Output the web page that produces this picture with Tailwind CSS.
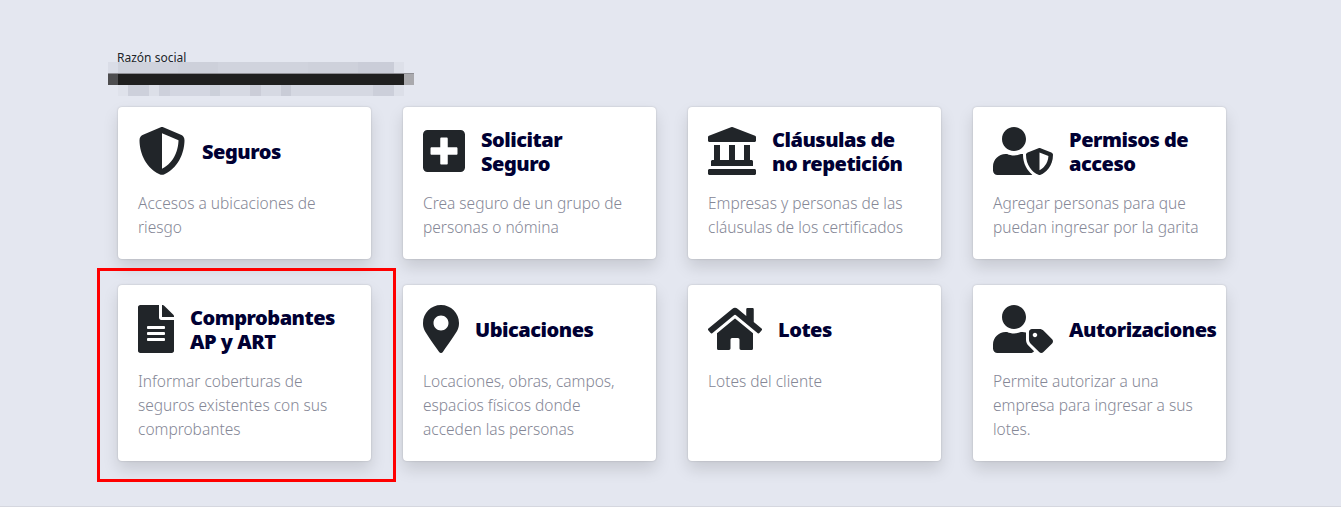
<!DOCTYPE html>
<html lang="es">
  <head>
    <meta charset="UTF-8" />
    <title>Inicio</title>
    <script src="https://cdn.jsdelivr.net/npm/@tailwindcss/browser@4"></script>
  </head>
  <body class="bg-[#e4e7f0] font-['Noto_Sans',sans-serif] overflow-hidden">
    <main class="relative h-[507px] border-b border-[#d5d7df] pl-[118px] pr-[115px]">
      <div class="h-[107px] pt-[50px]">
        <p class="h-[12px] -ml-px text-[12px] leading-[16px] text-[#212529]">Razón social</p>
        <!-- razon social pixelada -->
        <div class="relative -ml-[10px] w-[306px] h-[34px] flex flex-col">
          <div class="flex h-[11px]">
            <div class="w-[10px] bg-[#dadde7]"></div>
            <div class="w-[60px] bg-[#cfd2dc]"></div>
            <div class="w-[40px] bg-[#cdd0da]"></div>
            <div class="w-[90px] bg-[#d0d3dd]"></div>
            <div class="w-[50px] bg-[#ced1db]"></div>
            <div class="w-[36px] bg-[#cacdd8]"></div>
            <div class="w-[10px] bg-[#dde0e9]"></div>
          </div>
          <div class="flex h-[12px] border-t border-[#8f8f95]">
            <div class="w-[10px] bg-[#4d4d4f]"></div>
            <div class="w-[286px] bg-[#1f1f1f]"></div>
            <div class="w-[10px] bg-[#a9a9ad]"></div>
          </div>
          <div class="flex h-[11px] pl-[10px]">
            <div class="w-[10px] bg-[#dfe2eb]"></div>
            <div class="w-[21px] bg-[#cdd0db]"></div>
            <div class="w-[10px] bg-[#dcdfe8]"></div>
            <div class="w-[11px] bg-[#cdd0db]"></div>
            <div class="w-[40px] bg-[#d3d6e1]"></div>
            <div class="w-[10px] bg-[#ccd0da]"></div>
            <div class="w-[30px] bg-[#d6d9e3]"></div>
            <div class="w-[11px] bg-[#cbcdd8]"></div>
            <div class="w-[20px] bg-[#d6d9e3]"></div>
            <div class="w-[10px] bg-[#c9ccd7]"></div>
            <div class="w-[82px] bg-[#d5d8e2]"></div>
            <div class="w-[21px] bg-[#cccfda]"></div>
            <div class="w-[10px] bg-[#dcdfe8]"></div>
          </div>
        </div>
      </div>

      <div class="grid grid-cols-4 gap-x-[32px] gap-y-[26px] grid-rows-[152px_176px]">
        <a class="bg-white rounded-[4px] shadow-[0_8px_16px_rgba(0,0,0,0.13),0_0_2px_rgba(0,0,0,0.2)] p-5 block">
          <div class="flex items-center gap-4 h-[48px] mb-4">
            <svg class="w-[48px] h-[48px] fill-[#212529] shrink-0" viewBox="0 0 512 512"><path d="M256 0c4.6 0 9.2 1 13.4 2.9L457.7 82.8c22 9.3 38.4 31 38.3 57.2c-.5 99.2-41.3 280.7-213.6 363.2c-16.7 8-36.1 8-52.8 0C57.3 420.7 16.5 239.2 16 140c-.1-26.2 16.3-47.9 38.3-57.2L242.7 2.9C246.8 1 251.4 0 256 0zm0 66.8V444.8C394 378 431.1 230.1 432 141.4L256 66.8l0 0z"/></svg>
            <h2 class="pt-[2px] text-[20px] leading-[24px] font-black tracking-[-0.5px] text-[#000033]">Seguros</h2>
          </div>
          <p class="text-[15.5px] leading-[24px] font-light text-[#858796]">Accesos a ubicaciones de riesgo</p>
        </a>

        <a class="bg-white rounded-[4px] shadow-[0_8px_16px_rgba(0,0,0,0.13),0_0_2px_rgba(0,0,0,0.2)] p-5 block">
          <div class="flex items-center gap-4 h-[48px] mb-4">
            <svg class="w-[42px] h-[48px] fill-[#212529] shrink-0" viewBox="0 0 448 512"><path d="M400 32H48C21.5 32 0 53.5 0 80v352c0 26.5 21.5 48 48 48h352c26.5 0 48-21.5 48-48V80c0-26.5-21.5-48-48-48zm-32 252c0 6.6-5.4 12-12 12h-92v92c0 6.6-5.4 12-12 12h-56c-6.6 0-12-5.4-12-12v-92H92c-6.6 0-12-5.4-12-12v-56c0-6.6 5.4-12 12-12h92v-92c0-6.6 5.4-12 12-12h56c6.6 0 12 5.4 12 12v92h92c6.6 0 12 5.4 12 12v56z"/></svg>
            <h2 class="pt-[2px] text-[20px] leading-[24px] font-black tracking-[-0.5px] text-[#000033]">Solicitar<br />Seguro</h2>
          </div>
          <p class="text-[15.5px] leading-[24px] font-light text-[#858796]">Crea seguro de un grupo de personas o nómina</p>
        </a>

        <a class="bg-white rounded-[4px] shadow-[0_8px_16px_rgba(0,0,0,0.13),0_0_2px_rgba(0,0,0,0.2)] p-5 block">
          <div class="flex items-center gap-4 h-[48px] mb-4">
            <svg class="w-[48px] h-[48px] fill-[#212529] shrink-0" viewBox="0 0 512 512"><path d="M501.62 92.11L267.24 2.04a31.958 31.958 0 0 0-22.47 0L10.38 92.11A16.001 16.001 0 0 0 0 107.09V144c0 8.84 7.16 16 16 16h480c8.84 0 16-7.16 16-16v-36.91c0-6.67-4.14-12.64-10.38-14.98zM64 192v160H48c-8.84 0-16 7.16-16 16v48h448v-48c0-8.84-7.16-16-16-16h-16V192h-64v160h-96V192h-64v160h-96V192H64zm432 256H16c-8.84 0-16 7.16-16 16v32c0 8.84 7.16 16 16 16h480c8.84 0 16-7.16 16-16v-32c0-8.84-7.16-16-16-16z"/></svg>
            <h2 class="pt-[2px] text-[20px] leading-[24px] font-black tracking-[-0.5px] text-[#000033]">Cláusulas de<br />no repetición</h2>
          </div>
          <p class="text-[15.5px] leading-[24px] font-light text-[#858796]">Empresas y personas de las cláusulas de los certificados</p>
        </a>

        <a class="bg-white rounded-[4px] shadow-[0_8px_16px_rgba(0,0,0,0.13),0_0_2px_rgba(0,0,0,0.2)] p-5 block">
          <div class="flex items-center gap-4 h-[48px] mb-4">
            <svg class="w-[60px] h-[48px] fill-[#212529] shrink-0" viewBox="0 0 640 512"><path d="M622.3 271.1l-115.2-45c-4.1-1.6-12.6-3.7-22.2 0l-115.2 45c-10.7 4.2-17.7 14-17.7 24.9 0 111.6 68.7 188.8 132.9 213.9 9.6 3.7 18 1.6 22.2 0C558.4 489.9 640 420.5 640 296c0-10.9-7-20.7-17.7-24.9zM496 462.4V273.3l95.5 37.3c-5.6 87.1-60.9 135.4-95.5 151.8zM224 256c70.7 0 128-57.3 128-128S294.7 0 224 0 96 57.3 96 128s57.3 128 128 128zm96 40c0-2.5.8-4.8 1.1-7.2-2.5-.1-4.9-.8-7.5-.8h-16.7c-22.2 10.2-46.9 16-72.9 16s-50.6-5.8-72.9-16h-16.7C60.2 288 0 348.2 0 422.4V464c0 26.5 21.5 48 48 48h352c6.8 0 13.3-1.5 19.2-4-54-42.9-99.2-116.7-99.2-212z"/></svg>
            <h2 class="pt-[2px] text-[20px] leading-[24px] font-black tracking-[-0.5px] text-[#000033]">Permisos de<br />acceso</h2>
          </div>
          <p class="text-[15.5px] leading-[24px] font-light text-[#858796]">Agregar personas para que puedan ingresar por la garita</p>
        </a>

        <a class="bg-white rounded-[4px] shadow-[0_8px_16px_rgba(0,0,0,0.13),0_0_2px_rgba(0,0,0,0.2)] p-5 block">
          <div class="flex items-center gap-4 h-[48px] mb-4">
            <svg class="w-[36px] h-[48px] fill-[#212529] shrink-0" viewBox="0 0 384 512"><path d="M224 136V0H24C10.7 0 0 10.7 0 24v464c0 13.3 10.7 24 24 24h336c13.3 0 24-10.7 24-24V160H248c-13.2 0-24-10.8-24-24zm64 236c0 6.6-5.4 12-12 12H108c-6.6 0-12-5.4-12-12v-8c0-6.6 5.4-12 12-12h168c6.6 0 12 5.4 12 12v8zm0-64c0 6.6-5.4 12-12 12H108c-6.6 0-12-5.4-12-12v-8c0-6.6 5.4-12 12-12h168c6.6 0 12 5.4 12 12v8zm0-72v8c0 6.6-5.4 12-12 12H108c-6.6 0-12-5.4-12-12v-8c0-6.6 5.4-12 12-12h168c6.6 0 12 5.4 12 12zm96-114.1v6.1H256V0h6.1c6.4 0 12.5 2.5 17 7l97.9 98c4.5 4.5 7 10.6 7 16.9z"/></svg>
            <h2 class="pt-[2px] text-[20px] leading-[24px] font-black tracking-[-0.5px] text-[#000033]">Comprobantes<br />AP y ART</h2>
          </div>
          <p class="text-[15.5px] leading-[24px] font-light text-[#858796]">Informar coberturas de seguros existentes con sus comprobantes</p>
        </a>

        <a class="bg-white rounded-[4px] shadow-[0_8px_16px_rgba(0,0,0,0.13),0_0_2px_rgba(0,0,0,0.2)] p-5 block">
          <div class="flex items-center gap-4 h-[48px] mb-4">
            <svg class="w-[36px] h-[48px] fill-[#212529] shrink-0" viewBox="0 0 384 512"><path d="M172.268 501.67C26.97 291.031 0 269.413 0 192 0 85.961 85.961 0 192 0s192 85.961 192 192c0 77.413-26.97 99.031-172.268 309.67-9.535 13.774-29.93 13.773-39.464 0zM192 272c44.183 0 80-35.817 80-80s-35.817-80-80-80-80 35.817-80 80 35.817 80 80 80z"/></svg>
            <h2 class="pt-[2px] text-[20px] leading-[24px] font-black tracking-[-0.5px] text-[#000033]">Ubicaciones</h2>
          </div>
          <p class="text-[15.5px] leading-[24px] font-light text-[#858796]">Locaciones, obras, campos, espacios físicos donde acceden las personas</p>
        </a>

        <a class="bg-white rounded-[4px] shadow-[0_8px_16px_rgba(0,0,0,0.13),0_0_2px_rgba(0,0,0,0.2)] p-5 block">
          <div class="flex items-center gap-4 h-[48px] mb-4">
            <svg class="w-[54px] h-[48px] fill-[#212529] shrink-0" viewBox="0 0 576 512"><path d="M280.37 148.26L96 300.11V464a16 16 0 0 0 16 16l112.06-.29a16 16 0 0 0 15.92-16V368a16 16 0 0 1 16-16h64a16 16 0 0 1 16 16v95.64a16 16 0 0 0 16 16.05L464 480a16 16 0 0 0 16-16V300L295.67 148.26a12.19 12.19 0 0 0-15.3 0zM571.6 251.47L488 182.56V44.05a12 12 0 0 0-12-12h-56a12 12 0 0 0-12 12v72.61L318.47 43a48 48 0 0 0-61 0L4.34 251.47a12 12 0 0 0-1.6 16.9l25.5 31A12 12 0 0 0 45.15 301l235.22-193.74a12.19 12.19 0 0 1 15.3 0L530.9 301a12 12 0 0 0 16.9-1.6l25.5-31a12 12 0 0 0-1.7-16.93z"/></svg>
            <h2 class="pt-[2px] text-[20px] leading-[24px] font-black tracking-[-0.5px] text-[#000033]">Lotes</h2>
          </div>
          <p class="text-[15.5px] leading-[24px] font-light text-[#858796]">Lotes del cliente</p>
        </a>

        <a class="bg-white rounded-[4px] shadow-[0_8px_16px_rgba(0,0,0,0.13),0_0_2px_rgba(0,0,0,0.2)] p-5 block">
          <div class="flex items-center gap-4 h-[48px] mb-4">
            <svg class="w-[60px] h-[48px] fill-[#212529] shrink-0" viewBox="0 0 640 512"><path d="M630.6 364.9l-90.3-90.2c-12-12-28.3-18.7-45.3-18.7h-79.3c-17.7 0-32 14.3-32 32v79.2c0 17 6.7 33.2 18.7 45.2l90.3 90.2c12.5 12.5 32.8 12.5 45.3 0l92.5-92.5c12.6-12.5 12.6-32.7.1-45.2zm-182.8-21c-13.3 0-24-10.7-24-24s10.7-24 24-24 24 10.7 24 24c0 13.2-10.7 24-24 24zm-223.8-88c70.7 0 128-57.3 128-128C352 57.3 294.7 0 224 0S96 57.3 96 128c0 70.6 57.3 127.9 128 127.9zm127.8 111.2V294c-12.2-3.6-24.9-6.2-38.2-6.2h-16.7c-22.2 10.2-46.9 16-72.9 16s-50.6-5.8-72.9-16h-16.7C60.2 287.9 0 348.1 0 422.3v41.6c0 26.5 21.5 48 48 48h352c15.5 0 29.1-7.5 37.9-18.9l-58-58c-18.1-18.1-28.1-42.2-28.1-67.9z"/></svg>
            <h2 class="pt-[2px] text-[20px] leading-[24px] font-black tracking-[-0.5px] text-[#000033]">Autorizaciones</h2>
          </div>
          <p class="text-[15.5px] leading-[24px] font-light text-[#858796]">Permite autorizar a una empresa para ingresar a sus lotes.</p>
        </a>
      </div>

      <!-- marca roja sobre la tarjeta -->
      <div class="absolute left-[97px] top-[268px] w-[299px] h-[214px] border-[3px] border-[#ff0000] pointer-events-none"></div>
    </main>
  </body>
</html>
